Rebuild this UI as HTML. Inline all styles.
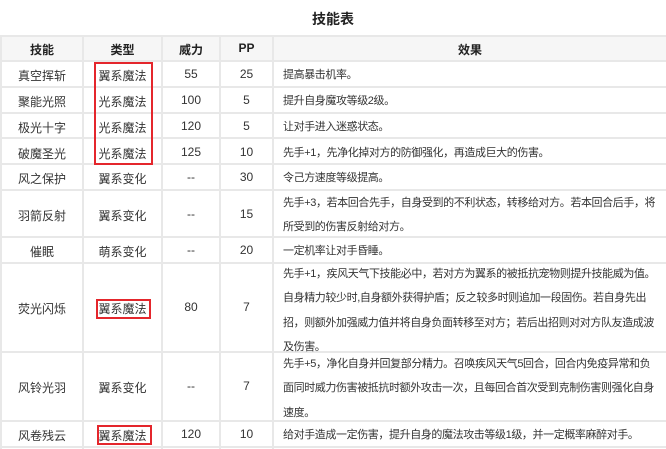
<!DOCTYPE html><html><head><meta charset="utf-8"><style>
body{margin:0;width:666px;height:449px;overflow:hidden;background:#fff;font-family:"Liberation Sans","Noto Sans CJK SC",sans-serif;color:#333;position:relative}
.t{position:absolute;top:9px;left:0;width:666px;text-align:center;font-size:14px;font-weight:bold;color:#222}
.h{position:absolute;left:0;width:666px;height:2px;background:#e8e8e8}
.v{position:absolute;top:35px;height:414px;width:2px;background:#e8e8e8}
.hd{position:absolute;left:0;top:35px;width:666px;height:26px;background:#f6f6f6}
.c{position:absolute;font-size:12px;text-align:center;white-space:nowrap}
.b{font-weight:bold;color:#222}
.e{position:absolute;left:283px;font-size:11px;letter-spacing:-0.4px;line-height:24.3px;white-space:nowrap}
.r{position:absolute;border:2px solid #e4262c}
</style></head><body>
<div class="t">技能表</div>
<div class="hd"></div>
<div class="h" style="top:35px"></div>
<div class="h" style="top:60px"></div>
<div class="h" style="top:86px"></div>
<div class="h" style="top:112px"></div>
<div class="h" style="top:137px"></div>
<div class="h" style="top:163px"></div>
<div class="h" style="top:189px"></div>
<div class="h" style="top:236px"></div>
<div class="h" style="top:262px"></div>
<div class="h" style="top:351px"></div>
<div class="h" style="top:420px"></div>
<div class="h" style="top:446px"></div>
<div class="v" style="left:0px"></div>
<div class="v" style="left:82px"></div>
<div class="v" style="left:161px"></div>
<div class="v" style="left:219px"></div>
<div class="v" style="left:272px"></div>

<div class="c b" style="left:2px;width:80px;top:41px">技能</div>
<div class="c b" style="left:84px;width:77px;top:41px">类型</div>
<div class="c b" style="left:163px;width:56px;top:41px">威力</div>
<div class="c b" style="left:221px;width:51px;top:41px">PP</div>
<div class="c b" style="left:274px;width:392px;top:41px">效果</div>

<div class="c" style="left:2px;width:80px;top:67px">真空挥斩</div><div class="c" style="left:84px;width:77px;top:67px">翼系魔法</div><div class="c" style="left:163px;width:56px;top:67px">55</div><div class="c" style="left:221px;width:51px;top:67px">25</div><div class="e" style="top:63px">提高暴击机率。</div>
<div class="c" style="left:2px;width:80px;top:93px">聚能光照</div><div class="c" style="left:84px;width:77px;top:93px">光系魔法</div><div class="c" style="left:163px;width:56px;top:93px">100</div><div class="c" style="left:221px;width:51px;top:93px">5</div><div class="e" style="top:89px">提升自身魔攻等级2级。</div>
<div class="c" style="left:2px;width:80px;top:119px">极光十字</div><div class="c" style="left:84px;width:77px;top:119px">光系魔法</div><div class="c" style="left:163px;width:56px;top:119px">120</div><div class="c" style="left:221px;width:51px;top:119px">5</div><div class="e" style="top:115px">让对手进入迷惑状态。</div>
<div class="c" style="left:2px;width:80px;top:145px">破魔圣光</div><div class="c" style="left:84px;width:77px;top:145px">光系魔法</div><div class="c" style="left:163px;width:56px;top:145px">125</div><div class="c" style="left:221px;width:51px;top:145px">10</div><div class="e" style="top:141px">先手+1，先净化掉对方的防御强化，再造成巨大的伤害。</div>
<div class="c" style="left:2px;width:80px;top:170px">风之保护</div><div class="c" style="left:84px;width:77px;top:170px">翼系变化</div><div class="c" style="left:163px;width:56px;top:170px">--</div><div class="c" style="left:221px;width:51px;top:170px">30</div><div class="e" style="top:166px">令己方速度等级提高。</div>
<div class="c" style="left:2px;width:80px;top:207px">羽箭反射</div><div class="c" style="left:84px;width:77px;top:207px">翼系变化</div><div class="c" style="left:163px;width:56px;top:207px">--</div><div class="c" style="left:221px;width:51px;top:207px">15</div><div class="e" style="top:191px">先手+3，若本回合先手，自身受到的不利状态，转移给对方。若本回合后手，将<br>所受到的伤害反射给对方。</div>
<div class="c" style="left:2px;width:80px;top:243px">催眠</div><div class="c" style="left:84px;width:77px;top:243px">萌系变化</div><div class="c" style="left:163px;width:56px;top:243px">--</div><div class="c" style="left:221px;width:51px;top:243px">20</div><div class="e" style="top:239px">一定机率让对手昏睡。</div>
<div class="c" style="left:2px;width:80px;top:300px">荧光闪烁</div><div class="c" style="left:84px;width:77px;top:300px">翼系魔法</div><div class="c" style="left:163px;width:56px;top:300px">80</div><div class="c" style="left:221px;width:51px;top:300px">7</div><div class="e" style="top:262px">先手+1，疾风天气下技能必中，若对方为翼系的被抵抗宠物则提升技能威为值。<br>自身精力较少时,自身额外获得护盾；反之较多时则追加一段固伤。若自身先出<br>招，则额外加强威力值并将自身负面转移至对方；若后出招则对对方队友造成波<br>及伤害。</div>
<div class="c" style="left:2px;width:80px;top:379px">风铃光羽</div><div class="c" style="left:84px;width:77px;top:379px">翼系变化</div><div class="c" style="left:163px;width:56px;top:379px">--</div><div class="c" style="left:221px;width:51px;top:379px">7</div><div class="e" style="top:352px">先手+5，净化自身并回复部分精力。召唤疾风天气5回合，回合内免疫异常和负<br>面同时威力伤害被抵抗时额外攻击一次，且每回合首次受到克制伤害则强化自身<br>速度。</div>
<div class="c" style="left:2px;width:80px;top:427px">风卷残云</div><div class="c" style="left:84px;width:77px;top:427px">翼系魔法</div><div class="c" style="left:163px;width:56px;top:427px">120</div><div class="c" style="left:221px;width:51px;top:427px">10</div><div class="e" style="top:423px">给对手造成一定伤害，提升自身的魔法攻击等级1级，并一定概率麻醉对手。</div>

<div class="r" style="left:94px;top:62px;width:55px;height:99px"></div>
<div class="r" style="left:96px;top:299px;width:51px;height:16px"></div>
<div class="r" style="left:97px;top:425px;width:51px;height:16px"></div>
</body></html>
